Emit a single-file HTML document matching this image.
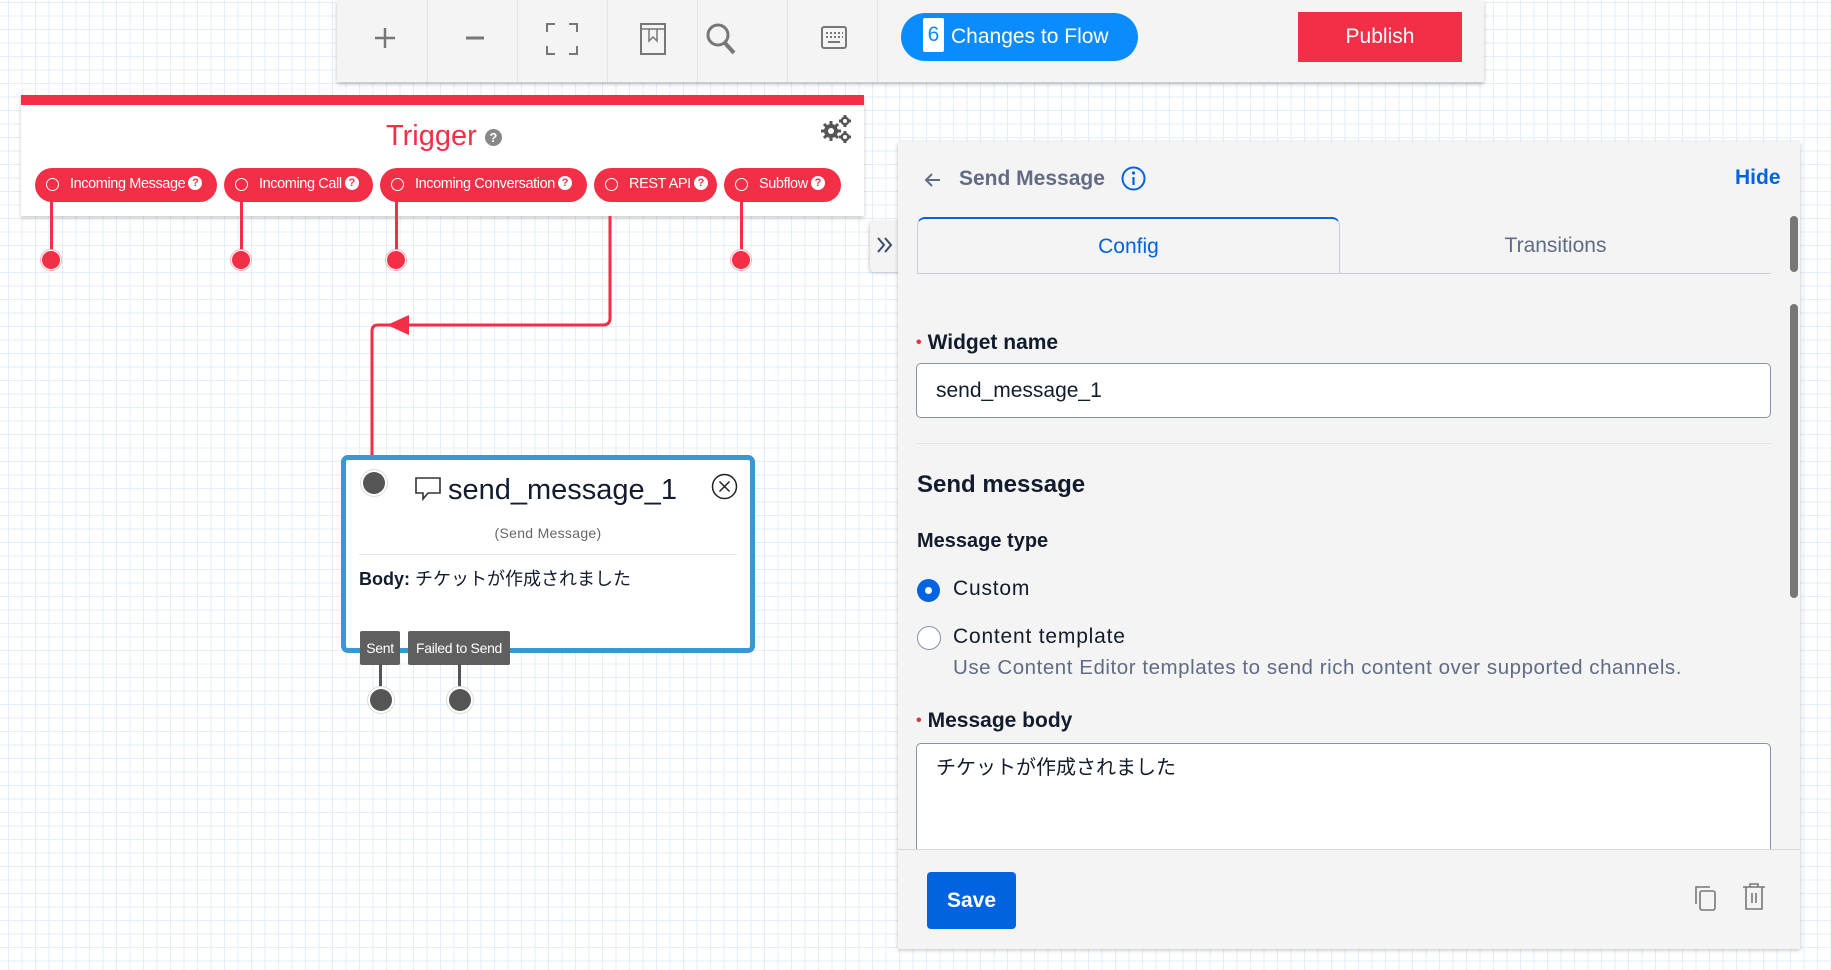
<!DOCTYPE html>
<html><head><meta charset="utf-8"><style>
*{box-sizing:border-box;margin:0;padding:0}
body{width:1831px;height:970px;overflow:hidden;position:relative;font-family:"Liberation Sans","Noto Sans CJK JP",sans-serif;
background-color:#fff;background-image:linear-gradient(#e3eefa 1px,transparent 1px),linear-gradient(90deg,#e3eefa 1px,transparent 1px);background-size:13.5px 13.5px;background-position:8px 2px}
.abs{position:absolute}
.tb{left:337px;top:0;width:1147px;height:82px;background:#f4f4f4;box-shadow:0 2px 4px rgba(0,0,0,.25)}
.tbd{position:absolute;top:0;width:1px;height:82px;background:#e4e4e4}
.ic{position:absolute;top:22px;color:#777}
.chg{left:901px;top:13px;width:237px;height:48px;border-radius:24px;background:#0a8cff;color:#fff;font-size:21px;line-height:48px;padding-left:22px}
.chg b{display:inline-block;background:#fff;color:#0a8cff;font-weight:normal;width:21px;height:34px;line-height:34px;text-align:center;border-radius:2px;margin-right:7px;vertical-align:middle;position:relative;top:-2px}
.pub{left:1298px;top:12px;width:164px;height:50px;background:#f22f46;color:#fff;font-size:21px;text-align:center;line-height:50px}
.trig{left:21px;top:95px;width:843px;height:121px;background:#fff;box-shadow:0 2px 4px rgba(0,0,0,.2);border-top:10px solid #f22f46}
.pill{position:absolute;top:168px;height:34px;border-radius:17px;background:#f22f46;color:#fff;font-size:14.5px;line-height:32px;padding-left:35px;letter-spacing:-.4px}
.pill:before{content:"";position:absolute;left:11px;top:10px;width:11px;height:11px;border:1.5px solid #fff;border-radius:50%}
.q{display:inline-block;width:14px;height:14px;border-radius:50%;background:#fff;color:#f22f46;font-size:11px;line-height:14px;text-align:center;font-weight:bold;margin-left:3px;vertical-align:2px}
.dot{position:absolute;width:20px;height:20px;border-radius:50%;background:#f22f46;border:1px solid #fff;box-shadow:0 0 0 1px #f9b0b8}
.vl{position:absolute;width:3px;background:#f22f46}
.node{left:341px;top:455px;width:414px;height:198px;border:5px solid #3a96d4;border-radius:7px;background:#fff}
.gd{position:absolute;width:22px;height:22px;border-radius:50%;background:#555;box-shadow:0 0 0 2px #fff,0 0 0 3px #ddd}
.tag{position:absolute;top:631px;height:34px;background:#5f5f5f;color:#fff;font-size:14px;line-height:34px;text-align:center;border-radius:2px;letter-spacing:-.3px}
.panel{left:898px;top:142px;width:902px;height:807px;background:#f4f4f4;box-shadow:0 1px 4px rgba(0,0,0,.25)}
.lbl{position:absolute;font-size:21px;color:#121c2d;font-weight:bold}
.req:before{content:"•";color:#e0313c;font-size:16px;margin-right:6px;position:relative;top:-2px}
.inp{position:absolute;background:#fff;border:1px solid #8891aa;border-radius:5px}
</style></head><body>

<div class="abs tb">
<div class="tbd" style="left:90px"></div><div class="tbd" style="left:180px"></div><div class="tbd" style="left:270px"></div><div class="tbd" style="left:360px"></div><div class="tbd" style="left:450px"></div><div class="tbd" style="left:540px"></div>
<svg class="ic" style="left:35px" width="26" height="30" viewBox="0 0 26 30"><path d="M13 6v20M3 16h20" stroke="#777" stroke-width="2.5"/></svg>
<svg class="ic" style="left:125px" width="26" height="30" viewBox="0 0 26 30"><path d="M4 16h18" stroke="#777" stroke-width="3"/></svg>
<svg class="ic" style="left:208px" width="34" height="34" viewBox="0 0 34 34"><path d="M2 10V2h8M24 2h8v8M32 24v8h-8M10 32H2v-8" stroke="#777" stroke-width="2" fill="none"/></svg>
<svg class="ic" style="left:302px" width="28" height="34" viewBox="0 0 28 34"><rect x="2" y="2" width="24" height="30" fill="none" stroke="#777" stroke-width="2"/><path d="M2 7h24M10 7v12l4-4 4 4V7" stroke="#777" stroke-width="1.5" fill="none"/></svg>
<svg class="ic" style="left:368px" width="32" height="34" viewBox="0 0 32 34"><circle cx="13" cy="13" r="10" fill="none" stroke="#777" stroke-width="3"/><path d="M20 21l9 10" stroke="#777" stroke-width="4"/></svg>
<svg class="ic" style="left:483px;top:25px" width="28" height="26" viewBox="0 0 28 26"><rect x="2" y="2" width="24" height="21" rx="2" fill="none" stroke="#777" stroke-width="2"/><path d="M6 8h2M10 8h2M14 8h2M18 8h2M22 8h1M6 12h2M10 12h2M14 12h2M18 12h2M22 12h1M8 17h12" stroke="#777" stroke-width="2"/></svg>
</div>
<div class="abs chg"><b>6</b>Changes to Flow</div>
<div class="abs pub">Publish</div>

<div class="abs trig"></div>
<div class="abs" style="left:386px;top:120px;font-size:29px;color:#f22f46">Trigger <span style="display:inline-block;width:17px;height:17px;border-radius:50%;background:#888;color:#fff;font-size:13px;line-height:17px;text-align:center;font-weight:bold;vertical-align:3px">?</span></div>
<svg class="abs" style="left:820px;top:114px" width="32" height="30" viewBox="0 0 32 30"><g fill="#555"><circle cx="11" cy="17" r="7"/><circle cx="25" cy="7" r="4.5"/><circle cx="25" cy="23" r="4.5"/></g><g stroke="#555" stroke-width="3"><path d="M11 7v20M1 17h20M4 10l14 14M18 10L4 24"/><path d="M25 1v12M19 7h12M25 17v12M19 23h12"/></g><circle cx="11" cy="17" r="3" fill="#fff"/><circle cx="25" cy="7" r="2" fill="#fff"/><circle cx="25" cy="23" r="2" fill="#fff"/></svg>

<div class="pill" style="left:35px;width:182px">Incoming Message<span class="q">?</span></div>
<div class="pill" style="left:224px;width:149px">Incoming Call<span class="q">?</span></div>
<div class="pill" style="left:380px;width:207px">Incoming Conversation<span class="q">?</span></div>
<div class="pill" style="left:594px;width:123px">REST API<span class="q">?</span></div>
<div class="pill" style="left:724px;width:117px">Subflow<span class="q">?</span></div>

<div class="vl" style="left:50px;top:200px;height:55px"></div><div class="dot" style="left:41px;top:250px"></div>
<div class="vl" style="left:240px;top:200px;height:55px"></div><div class="dot" style="left:231px;top:250px"></div>
<div class="vl" style="left:395px;top:200px;height:55px"></div><div class="dot" style="left:386px;top:250px"></div>
<div class="vl" style="left:740px;top:200px;height:55px"></div><div class="dot" style="left:731px;top:250px"></div>

<svg class="abs" style="left:360px;top:200px" width="260" height="265" viewBox="0 0 260 265"><path d="M250 16V118q0 7-7 7H18q-6 0-6 6V262" fill="none" stroke="#f22f46" stroke-width="3"/><path d="M27 125l22-10v20z" fill="#f22f46"/></svg>

<div class="abs node"></div>
<div class="gd" style="left:363px;top:472px"></div>
<svg class="abs" style="left:414px;top:476px" width="28" height="26" viewBox="0 0 28 26"><path d="M2 2h24v15H14l-5 6v-6H2z" fill="none" stroke="#333" stroke-width="1.6"/></svg>
<div class="abs" style="left:448px;top:474px;font-size:29px;color:#121c2d">send_message_1</div>
<svg class="abs" style="left:711px;top:473px" width="27" height="27" viewBox="0 0 27 27"><circle cx="13.5" cy="13.5" r="12" fill="none" stroke="#222" stroke-width="1.5"/><path d="M8.5 8.5l10 10M18.5 8.5l-10 10" stroke="#222" stroke-width="1.5"/></svg>
<div class="abs" style="left:341px;top:525px;width:414px;text-align:center;font-size:14px;color:#666;letter-spacing:.3px">(Send Message)</div>
<div class="abs" style="left:359px;top:554px;width:378px;height:1px;background:#e8e8e8"></div>
<div class="abs" style="left:359px;top:565px;font-size:18px;color:#121c2d"><b>Body:</b> チケットが作成されました</div>
<div class="tag" style="left:360px;width:40px">Sent</div>
<div class="tag" style="left:408px;width:102px">Failed to Send</div>
<div class="abs" style="left:379px;top:664px;width:3px;height:33px;background:#555"></div>
<div class="abs" style="left:458px;top:664px;width:3px;height:33px;background:#555"></div>
<div class="gd" style="left:370px;top:689px"></div>
<div class="gd" style="left:449px;top:689px"></div>

<div class="abs" style="left:870px;top:221px;width:32px;height:51px;background:#f4f4f4;border-radius:4px 0 0 4px;box-shadow:-1px 1px 3px rgba(0,0,0,.2)"></div>
<svg class="abs" style="left:875px;top:236px" width="20" height="18" viewBox="0 0 20 18"><path d="M3 2l6 7-6 7M10 2l6 7-6 7" fill="none" stroke="#3b4a6b" stroke-width="2"/></svg>
<div class="abs panel"></div>
<svg class="abs" style="left:924px;top:172px" width="18" height="16" viewBox="0 0 18 16"><path d="M16 8H3M8 2L2 8l6 6" fill="none" stroke="#606b85" stroke-width="2"/></svg>
<div class="abs" style="left:959px;top:167px;font-size:21px;color:#606b85;font-weight:bold">Send Message</div>
<svg class="abs" style="left:1121px;top:166px" width="25" height="25" viewBox="0 0 25 25"><circle cx="12.5" cy="12.5" r="11" fill="none" stroke="#0263e0" stroke-width="2"/><circle cx="12.5" cy="7" r="1.6" fill="#0263e0"/><path d="M12.5 11v8" stroke="#0263e0" stroke-width="2.2"/></svg>
<div class="abs" style="left:1735px;top:166px;font-size:21px;color:#0263e0;font-weight:bold">Hide</div>

<div class="abs" style="left:917px;top:217px;width:423px;height:57px;border:1px solid #cacdd8;border-top:2px solid #0263e0;border-bottom:none;border-radius:8px 8px 0 0;text-align:center;line-height:56px;font-size:21px;color:#0263e0">Config</div>
<div class="abs" style="left:1340px;top:217px;width:431px;height:57px;text-align:center;line-height:58px;font-size:21px;color:#606b85">Transitions</div>
<div class="abs" style="left:917px;top:273px;width:854px;height:1px;background:#cacdd8"></div>
<div class="abs" style="left:1790px;top:216px;width:8px;height:56px;background:#777;border-radius:4px"></div>
<div class="abs" style="left:1790px;top:304px;width:8px;height:294px;background:#777;border-radius:4px"></div>

<div class="lbl req" style="left:916px;top:331px">Widget name</div>
<div class="inp" style="left:916px;top:363px;width:855px;height:55px;font-size:21px;line-height:53px;padding-left:19px;color:#121c2d">send_message_1</div>
<div class="abs" style="left:916px;top:443px;width:855px;height:1px;background:#e1e3ea"></div>
<div class="abs" style="left:917px;top:471px;font-size:24px;color:#121c2d;font-weight:bold">Send message</div>
<div class="lbl" style="left:917px;top:530px;font-size:20px">Message type</div>
<div class="abs" style="left:917px;top:579px;width:23px;height:23px;border-radius:50%;background:#0263e0"></div>
<div class="abs" style="left:925px;top:587px;width:7px;height:7px;border-radius:50%;background:#fff"></div>
<div class="abs" style="left:953px;top:577px;font-size:21px;color:#121c2d;letter-spacing:.8px">Custom</div>
<div class="abs" style="left:917px;top:626px;width:24px;height:24px;border-radius:50%;background:#fff;border:1px solid #8891aa"></div>
<div class="abs" style="left:953px;top:625px;font-size:21px;color:#121c2d;letter-spacing:.8px">Content template</div>
<div class="abs" style="left:953px;top:656px;font-size:20.5px;color:#606b85;letter-spacing:.55px">Use Content Editor templates to send rich content over supported channels.</div>
<div class="lbl req" style="left:916px;top:709px">Message body</div>
<div class="inp" style="left:916px;top:743px;width:855px;height:120px;font-size:20px;padding:7px 19px;color:#121c2d">チケットが作成されました</div>

<div class="abs" style="left:898px;top:849px;width:902px;height:100px;background:#f4f4f4;border-top:1px solid #d6d8de"></div>
<div class="abs" style="left:927px;top:872px;width:89px;height:57px;background:#0263e0;border-radius:4px;color:#fff;font-weight:bold;font-size:21px;text-align:center;line-height:57px">Save</div>
<svg class="abs" style="left:1693px;top:884px" width="26" height="28" viewBox="0 0 26 28"><path d="M3 20V3h14" fill="none" stroke="#777" stroke-width="1.6"/><rect x="7" y="7" width="15" height="19" rx="2" fill="none" stroke="#777" stroke-width="1.6"/></svg>
<svg class="abs" style="left:1741px;top:882px" width="26" height="30" viewBox="0 0 26 30"><path d="M2 5h22M9 5V2h8v3M5 5v22h16V5M11 11v10M15 11v10" fill="none" stroke="#777" stroke-width="1.6"/></svg>
</body></html>
